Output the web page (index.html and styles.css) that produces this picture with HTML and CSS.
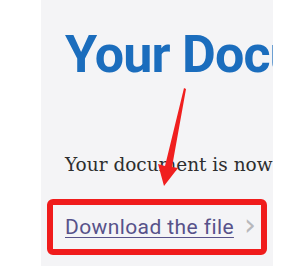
FILE: index.html
```html
<!DOCTYPE html>
<html lang="en">
<head>
  <meta charset="UTF-8" />
  <title>Your Document</title>
  <link rel="stylesheet" href="styles.css">
</head>
<body>
  <div class="panel">
    <h1 class="title">Your Document</h1>
    <p class="message">Your document is now ready</p>
    <div class="download-box">
      <a class="download" href="#">Download the file</a>
      <span class="chevron">&#8250;</span>
    </div>
  </div>

  <!-- red annotation arrow drawn over the page -->
  <svg class="arrow" width="291" height="266" viewBox="0 0 291 266">
    <polygon points="184,88 186,89 172,167 178,168 164,186 158,164 165,166" fill="#f01f1f"/>
  </svg>
</body>
</html>
```

FILE: styles.css
```css
body {
  margin: 0;
  background: #ffffff;
  width: 291px;
  height: 266px;
  overflow: hidden;
}

.panel {
  margin-left: 41px;
  width: 232px;
  height: 266px;
  background: #f4f4f6;
  overflow: hidden;
  white-space: nowrap;
  padding-left: 24px;
  box-sizing: border-box;
}

.title {
  margin: 0;
  padding-top: 23px;
  font-family: Roboto, sans-serif;
  font-weight: 700;
  font-size: 52px;
  line-height: 64px;
  color: #1b6dbd;
  letter-spacing: -0.8px;
}

.message {
  margin: 0;
  padding-top: 66px;
  font-family: "DejaVu Serif", serif;
  font-size: 18.5px;
  line-height: 24px;
  color: #2e2e2e;
}

.download-box {
  margin: 22px 0 0 -18px;
  width: 196px;
  height: 44px;
  border: 6px solid #f01c1c;
  border-radius: 6px;
  display: flex;
  align-items: center;
  padding-left: 12px;
  gap: 10px;
}

.download {
  font-family: Roboto, sans-serif;
  font-size: 21px;
  letter-spacing: 0.4px;
  color: #57528a;
  text-decoration: underline;
  text-decoration-thickness: 1px;
  text-underline-offset: 3px;
}

.chevron {
  font-family: "DejaVu Sans", sans-serif;
  font-size: 30px;
  color: #b8b8bc;
  line-height: 1;
  margin-top: -4px;
}

.arrow {
  position: absolute;
  top: 0;
  left: 0;
}
```
